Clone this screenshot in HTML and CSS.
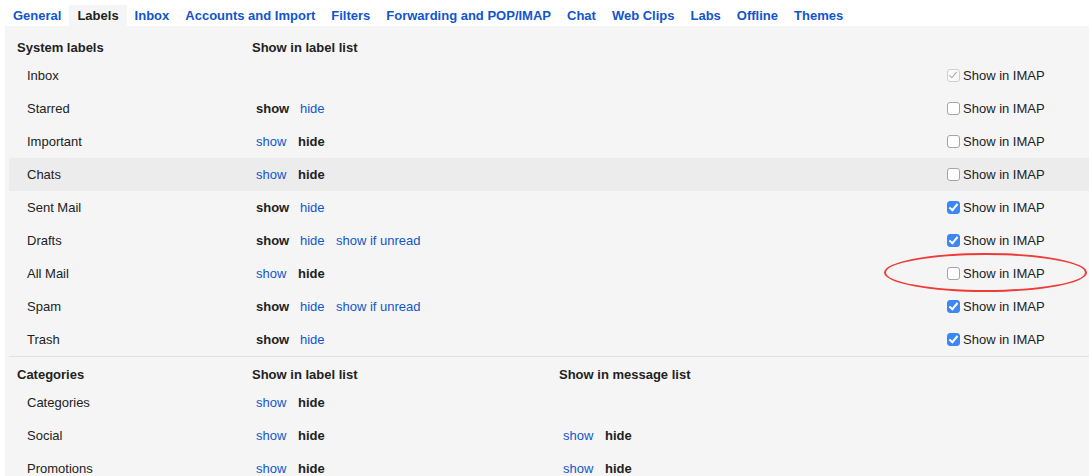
FILE: index.html
```html
<!DOCTYPE html>
<html lang="en">

<head>
    <meta charset="UTF-8">
    <title>Settings - Labels</title>
    <link rel="stylesheet" href="styles.css">
</head>

<body>
    <div class="tabs">
        <a class="tab">General</a>
        <a class="tab active">Labels</a>
        <a class="tab">Inbox</a>
        <a class="tab">Accounts and Import</a>
        <a class="tab">Filters</a>
        <a class="tab">Forwarding and POP/IMAP</a>
        <a class="tab">Chat</a>
        <a class="tab">Web Clips</a>
        <a class="tab">Labs</a>
        <a class="tab">Offline</a>
        <a class="tab">Themes</a>
    </div>

    <div class="panel">
        <!-- 시스템 라벨 -->
        <div class="row head">
            <div class="name">System labels</div>
            <div>Show in label list</div>
            <div></div>
            <div></div>
        </div>
        <div class="row">
            <div class="name">Inbox</div>
            <div class="opts"></div>
            <div></div>
            <label class="imap"><span class="box checked disabled"></span>Show in IMAP</label>
        </div>
        <div class="row">
            <div class="name">Starred</div>
            <div class="opts"><b class="o-show">show</b><a class="o-hide">hide</a></div>
            <div></div>
            <label class="imap"><span class="box"></span>Show in IMAP</label>
        </div>
        <div class="row">
            <div class="name">Important</div>
            <div class="opts"><a class="o-show">show</a><b class="o-hide">hide</b></div>
            <div></div>
            <label class="imap"><span class="box"></span>Show in IMAP</label>
        </div>
        <div class="row hover">
            <div class="name">Chats</div>
            <div class="opts"><a class="o-show">show</a><b class="o-hide">hide</b></div>
            <div></div>
            <label class="imap"><span class="box"></span>Show in IMAP</label>
        </div>
        <div class="row">
            <div class="name">Sent Mail</div>
            <div class="opts"><b class="o-show">show</b><a class="o-hide">hide</a></div>
            <div></div>
            <label class="imap"><span class="box checked"></span>Show in IMAP</label>
        </div>
        <div class="row">
            <div class="name">Drafts</div>
            <div class="opts"><b class="o-show">show</b><a class="o-hide">hide</a><a>show if unread</a></div>
            <div></div>
            <label class="imap"><span class="box checked"></span>Show in IMAP</label>
        </div>
        <div class="row">
            <div class="name">All Mail</div>
            <div class="opts"><a class="o-show">show</a><b class="o-hide">hide</b></div>
            <div></div>
            <label class="imap"><span class="box"></span>Show in IMAP</label>
        </div>
        <div class="row">
            <div class="name">Spam</div>
            <div class="opts"><b class="o-show">show</b><a class="o-hide">hide</a><a>show if unread</a></div>
            <div></div>
            <label class="imap"><span class="box checked"></span>Show in IMAP</label>
        </div>
        <div class="row">
            <div class="name">Trash</div>
            <div class="opts"><b class="o-show">show</b><a class="o-hide">hide</a></div>
            <div></div>
            <label class="imap"><span class="box checked"></span>Show in IMAP</label>
        </div>

        <!-- 카테고리 -->
        <div class="row head cat-head">
            <div class="name">Categories</div>
            <div>Show in label list</div>
            <div>Show in message list</div>
            <div></div>
        </div>
        <div class="row">
            <div class="name">Categories</div>
            <div class="opts"><a class="o-show">show</a><b class="o-hide">hide</b></div>
            <div></div>
            <div></div>
        </div>
        <div class="row">
            <div class="name">Social</div>
            <div class="opts"><a class="o-show">show</a><b class="o-hide">hide</b></div>
            <div class="opts"><a class="o-show">show</a><b class="o-hide">hide</b></div>
            <div></div>
        </div>
        <div class="row">
            <div class="name">Promotions</div>
            <div class="opts"><a class="o-show">show</a><b class="o-hide">hide</b></div>
            <div class="opts"><a class="o-show">show</a><b class="o-hide">hide</b></div>
            <div></div>
        </div>
    </div>

    <!-- 강조 표시 -->
    <div class="circle"></div>
</body>

</html>
```

FILE: styles.css
```css
html,
body {
    margin: 0;
    padding: 0;
    height: 100%;
    overflow: hidden;
}

body {
    position: relative;
    background-color: #fff;
    font-family: "Liberation Sans", Arial, sans-serif;
    font-size: 13px;
    color: #222;
}

/* 상단 탭 */
.tabs {
    display: flex;
    padding: 5px 0 0 5px;
    height: 21px;
}

.tab {
    padding: 0 8px;
    line-height: 21px;
    font-weight: bold;
    color: #15c;
    white-space: nowrap;
}

.tab.active {
    background-color: #f5f5f5;
    color: #222;
}

/* 설정 패널 */
.panel {
    margin-left: 5px;
    background-color: #f5f5f5;
    height: 100%;
}

.row {
    display: grid;
    grid-template-columns: 243px 307px 1fr 142px;
    align-items: center;
    height: 33px;
    margin-left: 4px;
}

.row .name {
    padding-left: 18px;
}

.row.hover {
    background-color: #ececec;
}

.row.head {
    height: auto;
    padding: 14px 0 4px;
    font-weight: bold;
}

.row.head .name {
    padding-left: 8px;
}

.row.cat-head {
    border-top: 1px solid #e0e0e0;
    padding: 10px 0 4px;
}

.opts {
    padding-left: 4px;
    white-space: nowrap;
}

.opts a {
    color: #15c;
    cursor: pointer;
}

.opts .o-show,
.opts .o-hide {
    display: inline-block;
}

.opts .o-show {
    width: 42px;
}

.opts .o-hide {
    width: 38px;
}

.opts a.o-hide {
    padding-left: 2px;
    width: 36px;
}

/* IMAP 체크박스 */
.imap {
    display: flex;
    align-items: center;
    white-space: nowrap;
}

.box {
    box-sizing: border-box;
    width: 13px;
    height: 13px;
    margin-right: 3px;
    border: 1px solid #a5a5a5;
    border-radius: 3px;
    background-color: #fff;
    position: relative;
}

.box.checked {
    background-color: #3d86f5;
    border-color: #3d86f5;
}

.box.checked::after {
    content: "";
    position: absolute;
    left: 3px;
    top: 0px;
    width: 3px;
    height: 7px;
    border: solid #fff;
    border-width: 0 2px 2px 0;
    transform: rotate(40deg);
}

.box.checked.disabled {
    background-color: #fafafa;
    border-color: #cfcfcf;
}

.box.checked.disabled::after {
    border-color: #a8a8a8;
    border-width: 0 1.5px 1.5px 0;
}

/* 빨간 원 표시 */
.circle {
    position: absolute;
    left: 884px;
    top: 253px;
    width: 199px;
    height: 35px;
    border: 2.5px solid #f03a36;
    border-radius: 50%;
}
```
